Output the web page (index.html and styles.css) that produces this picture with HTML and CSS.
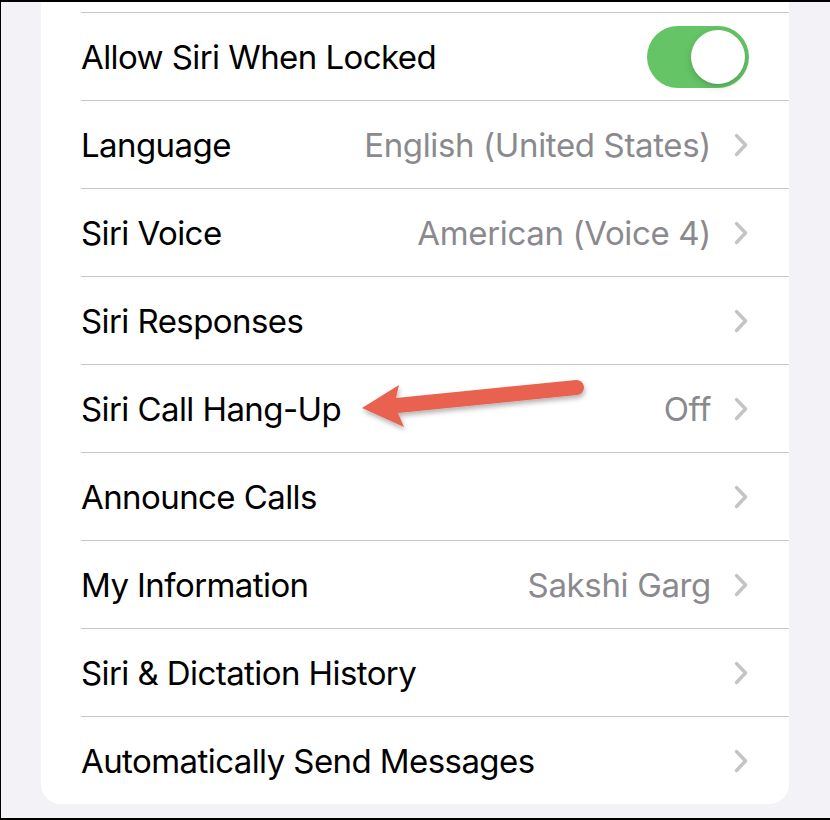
FILE: index.html
```html
<!DOCTYPE html>
<html>
<head>
<meta charset="utf-8">
<link rel="stylesheet" href="styles.css">
</head>
<body>
<div class="frame">
  <div class="card">
    <div class="top-gap"></div>
    <div class="row">
      <span class="label">Allow Siri When Locked</span>
      <span class="toggle"><span class="knob"></span></span>
    </div>
    <div class="row">
      <span class="label">Language</span>
      <span class="value">English (United States)</span>
      <svg class="chev" viewBox="0 0 14 24" width="14" height="24"><path d="M2.5 2.5 L11.5 12 L2.5 21.5"/></svg>
    </div>
    <div class="row">
      <span class="label">Siri Voice</span>
      <span class="value">American (Voice 4)</span>
      <svg class="chev" viewBox="0 0 14 24" width="14" height="24"><path d="M2.5 2.5 L11.5 12 L2.5 21.5"/></svg>
    </div>
    <div class="row">
      <span class="label">Siri Responses</span>
      <span class="value"></span>
      <svg class="chev" viewBox="0 0 14 24" width="14" height="24"><path d="M2.5 2.5 L11.5 12 L2.5 21.5"/></svg>
    </div>
    <div class="row">
      <span class="label">Siri Call Hang-Up</span>
      <span class="value">Off</span>
      <svg class="chev" viewBox="0 0 14 24" width="14" height="24"><path d="M2.5 2.5 L11.5 12 L2.5 21.5"/></svg>
    </div>
    <div class="row">
      <span class="label">Announce Calls</span>
      <span class="value"></span>
      <svg class="chev" viewBox="0 0 14 24" width="14" height="24"><path d="M2.5 2.5 L11.5 12 L2.5 21.5"/></svg>
    </div>
    <div class="row">
      <span class="label">My Information</span>
      <span class="value">Sakshi Garg</span>
      <svg class="chev" viewBox="0 0 14 24" width="14" height="24"><path d="M2.5 2.5 L11.5 12 L2.5 21.5"/></svg>
    </div>
    <div class="row">
      <span class="label">Siri &amp; Dictation History</span>
      <span class="value"></span>
      <svg class="chev" viewBox="0 0 14 24" width="14" height="24"><path d="M2.5 2.5 L11.5 12 L2.5 21.5"/></svg>
    </div>
    <div class="row">
      <span class="label">Automatically Send Messages</span>
      <span class="value"></span>
      <svg class="chev" viewBox="0 0 14 24" width="14" height="24"><path d="M2.5 2.5 L11.5 12 L2.5 21.5"/></svg>
    </div>
  </div>
  <svg class="arrow" viewBox="0 0 830 820" width="830" height="820">
    <defs>
      <filter id="sh" x="-20%" y="-50%" width="140%" height="200%">
        <feDropShadow dx="1" dy="3" stdDeviation="2.5" flood-color="#000" flood-opacity="0.3"/>
      </filter>
    </defs>
    <path filter="url(#sh)" fill="#e8624f" d="M362 408 L399 385 L396 398 L576 380 A7.5 7.5 0 0 1 577 395 L398 413 L404 427 Z"/>
  </svg>
</div>
</body>
</html>
```

FILE: styles.css
```css
* { box-sizing: border-box; }
html, body { margin: 0; padding: 0; }
body {
  width: 830px;
  height: 820px;
  overflow: hidden;
  font-family: Inter, "Noto Sans", "Liberation Sans", sans-serif;
}
.frame {
  position: relative;
  width: 830px;
  height: 820px;
  background: #f2f2f7;
  border-top: 2px solid #000;
  border-left: 1px solid #000;
  border-bottom: 2px solid #000;
  padding-left: 40px;
}
.card {
  width: 748px;
  background: #fff;
  border-radius: 0 0 20px 20px;
  display: flex;
  flex-direction: column;
}
.top-gap { height: 10px; }
.row {
  height: 88px;
  margin-left: 40px;
  border-top: 1px solid #c6c6c8;
  display: flex;
  align-items: center;
  padding-right: 41px;
  font-size: 33px;
}
.label { color: #000; flex: 0 0 auto; letter-spacing: -0.58px; }
.value {
  flex: 1 1 auto;
  text-align: right;
  color: #8a8a8e;
  margin-right: 23px;
  letter-spacing: -0.35px;
}
.chev {
  flex: 0 0 auto;
  fill: none;
  stroke: #c4c4c7;
  stroke-width: 3.4;
  stroke-linecap: round;
  stroke-linejoin: round;
}
.toggle {
  margin-left: auto;
  margin-right: -1px;
  width: 102px;
  height: 62px;
  border-radius: 31px;
  background: #65c466;
  position: relative;
}
.knob {
  position: absolute;
  top: 4px;
  right: 4px;
  width: 54px;
  height: 54px;
  border-radius: 50%;
  background: #fff;
  box-shadow: 0 3px 8px rgba(0,0,0,0.15), 0 2px 1px rgba(0,0,0,0.06);
}
.arrow {
  position: absolute;
  top: -2px;
  left: -1px;
  pointer-events: none;
}
```
